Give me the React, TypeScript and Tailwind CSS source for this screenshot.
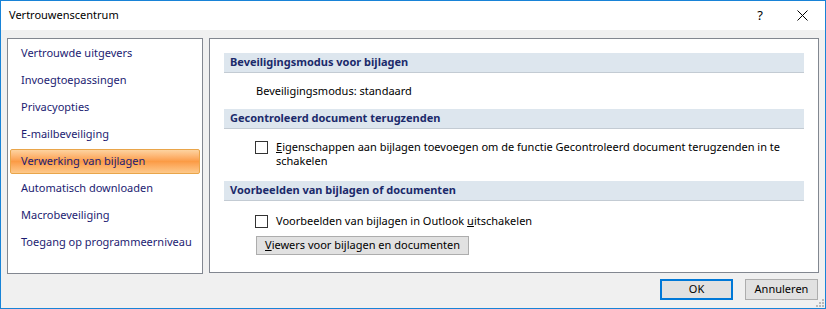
const menuItems = [
  'Vertrouwde uitgevers',
  'Invoegtoepassingen',
  'Privacyopties',
  'E-mailbeveiliging',
  'Verwerking van bijlagen',
  'Automatisch downloaden',
  'Macrobeveiliging',
  'Toegang op programmeerniveau',
]

const selected = 'Verwerking van bijlagen'

function SectionHeader({ children }: { children: React.ReactNode }) {
  return (
    <div className="flex h-[20px] items-center border-b border-[#c3cbd3] bg-[#dde6ee] pl-[6px] font-bold text-[#1b2a6b]">
      {children}
    </div>
  )
}

function Checkbox() {
  return <div className="h-[13px] w-[13px] shrink-0 border border-[#333333] bg-white" />
}

function ResizeGrip() {
  return (
    <svg width="10" height="10" viewBox="0 0 10 10" className="absolute bottom-[1px] right-[1px]">
      {[
        [8, 2],
        [8, 5],
        [5, 5],
        [8, 8],
        [5, 8],
        [2, 8],
      ].map(([x, y]) => (
        <rect key={`${x}-${y}`} x={x} y={y} width="2" height="2" fill="#b9b9b9" />
      ))}
    </svg>
  )
}

export default function App() {
  return (
    <div
      className="relative flex h-[309px] w-[826px] flex-col border border-[#1883d7] bg-[#f0f0f0] text-[11px] text-black"
      style={{ fontFamily: '"Noto Sans", "Liberation Sans", sans-serif' }}
    >
      {/* title bar */}
      <div className="flex h-[29px] items-center bg-white pl-[8px]">
        <span className="flex-1 text-[11px] text-black">Vertrouwenscentrum</span>
        <span className="mr-[34px] text-[13px] text-black">?</span>
        <svg width="11" height="11" viewBox="0 0 11 11" className="mr-[17px]">
          <path d="M0.5 0.5 L10.5 10.5 M10.5 0.5 L0.5 10.5" stroke="#000" strokeWidth="1" />
        </svg>
      </div>

      <div className="flex gap-[6px] px-[6px] pt-[8px]">
        {/* left nav */}
        <div className="flex h-[236px] w-[196px] flex-col gap-[2px] whitespace-nowrap border border-[#828790] bg-white px-[2px] pt-[2px]">
          {menuItems.map((item) =>
            item === selected ? (
              <div
                key={item}
                className="flex h-[25px] items-center rounded-[2px] border border-[#e9a54a] bg-gradient-to-b from-[#fdd3a0] via-[#fb9b45] to-[#fdc98a] pl-[10px] text-[#1c1c72]"
              >
                {item}
              </div>
            ) : (
              <div key={item} className="flex h-[25px] items-center pl-[11px] text-[#1c1c72]">
                {item}
              </div>
            ),
          )}
        </div>

        {/* right content */}
        <div className="flex h-[235px] w-[610px] flex-col border border-[#828790] bg-white px-[14px] pt-[14px]">
          <SectionHeader>Beveiligingsmodus voor bijlagen</SectionHeader>
          <div className="flex h-[36px] items-center pl-[32px]">Beveiligingsmodus: standaard</div>

          <SectionHeader>Gecontroleerd document terugzenden</SectionHeader>
          <div className="flex gap-[8px] pl-[31px] pt-[11px]">
            <div className="pt-[1px]">
              <Checkbox />
            </div>
            <p className="w-[515px] leading-[14px]">
              <u>E</u>igenschappen aan bijlagen toevoegen om de functie Gecontroleerd document terugzenden in te
              schakelen
            </p>
          </div>
          <div className="h-[13px]" />

          <SectionHeader>Voorbeelden van bijlagen of documenten</SectionHeader>
          <div className="flex items-center gap-[8px] pl-[31px] pt-[12px]">
            <Checkbox />
            <span>
              Voorbeelden van bijlagen in Outlook <u>u</u>itschakelen
            </span>
          </div>
          <div className="pl-[32px] pt-[6px]">
            <button className="flex h-[19px] w-[213px] items-center justify-center whitespace-nowrap border border-[#adadad] bg-[#e1e1e1]">
              <span>
                <u>V</u>iewers voor bijlagen en documenten
              </span>
            </button>
          </div>
        </div>
      </div>

      {/* footer buttons */}
      <div className="flex justify-end gap-[12px] pr-[7px] pt-[5px]">
        <button className="flex h-[21px] w-[73px] items-center justify-center border-2 border-[#0078d7] bg-[#e1e1e1]">
          OK
        </button>
        <button className="flex h-[21px] w-[73px] items-center justify-center border border-[#adadad] bg-[#e1e1e1]">
          Annuleren
        </button>
      </div>

      <ResizeGrip />
    </div>
  )
}
